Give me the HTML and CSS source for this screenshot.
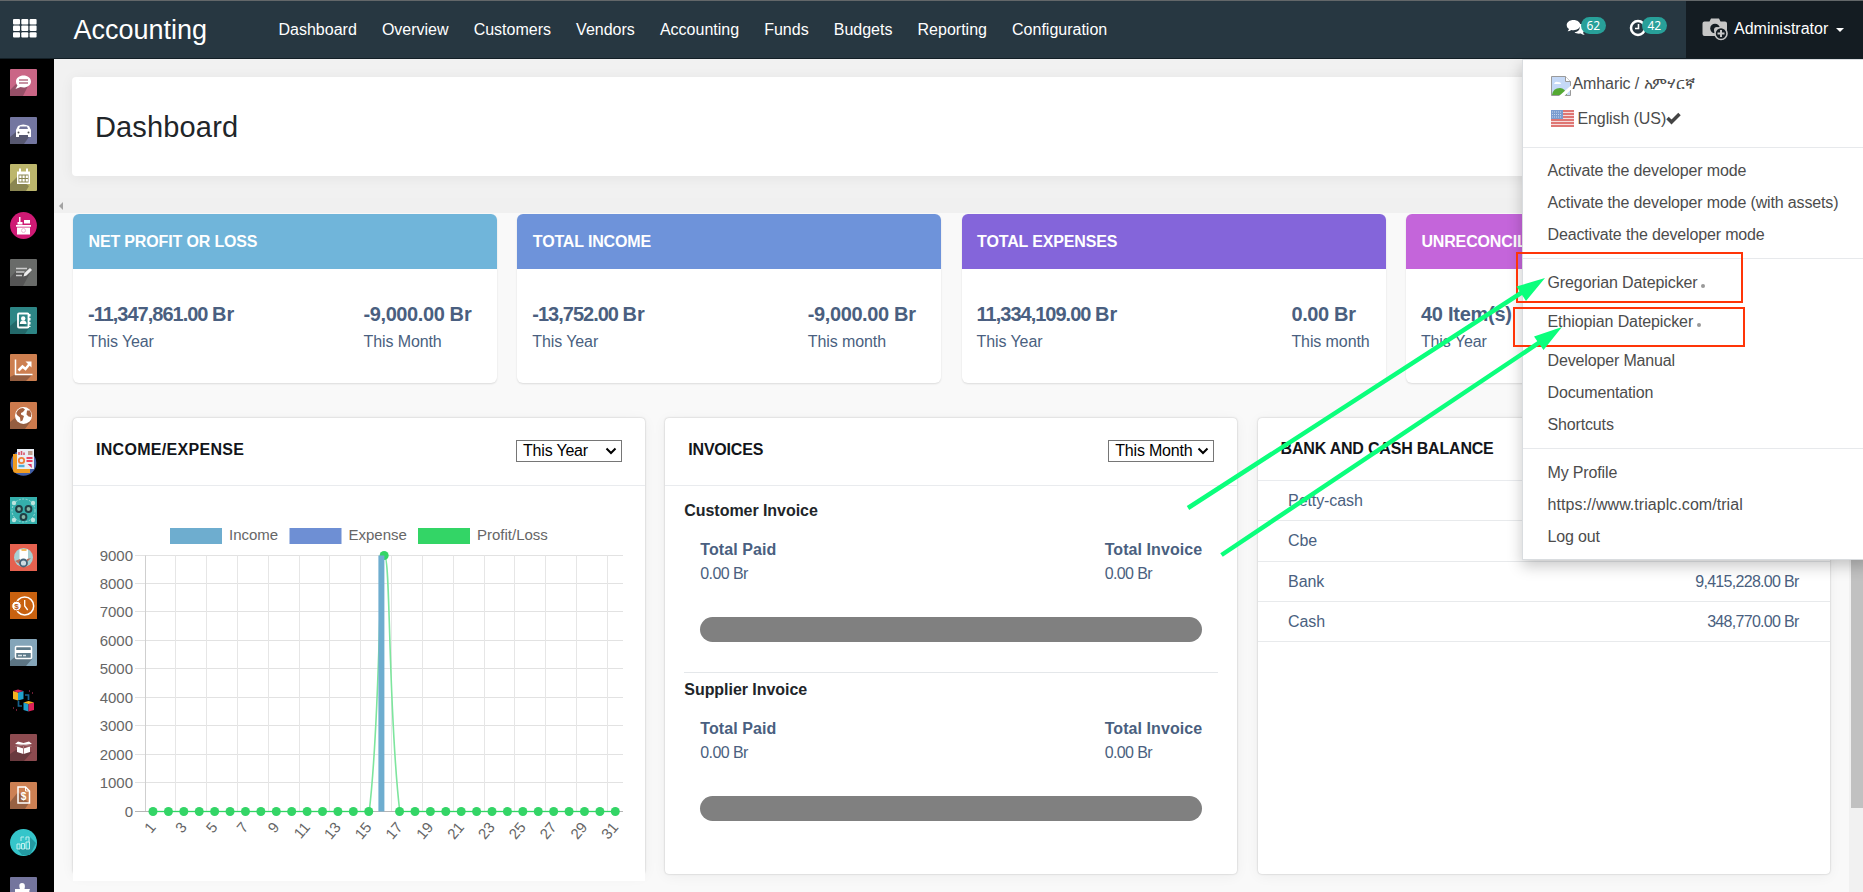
FILE: index.html
```html
<!DOCTYPE html>
<html lang="en">
<head>
<meta charset="utf-8">
<title>Accounting - Dashboard</title>
<link rel="stylesheet" href="styles.css">
</head>
<body>
<header class="topbar">
  <svg class="apps" viewBox="0 0 24 19" fill="#fff"><rect width="7" height="5.4" rx="1"/><rect x="8.3" width="7" height="5.4" rx="1"/><rect x="16.6" width="7" height="5.4" rx="1"/><rect y="6.6" width="7" height="5.4" rx="1"/><rect x="8.3" y="6.6" width="7" height="5.4" rx="1"/><rect x="16.6" y="6.6" width="7" height="5.4" rx="1"/><rect y="13.2" width="7" height="5.4" rx="1"/><rect x="8.3" y="13.2" width="7" height="5.4" rx="1"/><rect x="16.6" y="13.2" width="7" height="5.4" rx="1"/></svg>
  <div class="brand">Accounting</div>
  <nav class="menu"><span>Dashboard</span><span>Overview</span><span>Customers</span><span>Vendors</span><span>Accounting</span><span>Funds</span><span>Budgets</span><span>Reporting</span><span>Configuration</span></nav>
  <div class="systray">
    <div class="tray"><svg width="20" height="18" viewBox="0 0 20 18" fill="#fff"><path d="M13 5c3.5 0 6 2 6 4.8 0 1.5-.8 2.7-1.9 3.6.2 1 .8 1.8 1.700 2.600-1.600 0-3-.5-4-1.400-2.500.4-4.800 0-6.300-1.300C12.500 13 15 10 13 5z"/><path d="M7.500 1C11.300 1 14.300 3.200 14.300 6s-3 5.200-6.800 5.200c-.8 0-1.500-.1-2.200-.3-1 .8-2.300 1.200-3.700 1.300.8-.7 1.200-1.300 1.400-2.100C1.600 9.200.7 7.800.7 6 .7 3.200 3.700 1 7.500 1z"/></svg><b class="badge">62</b></div>
    <div class="tray"><svg width="18" height="18" viewBox="0 0 18 18" fill="none" stroke="#fff"><circle cx="9" cy="9" r="7" stroke-width="2.5"/><path d="M9.5 5v4.5H6" stroke-width="1.6"/></svg><b class="badge">42</b></div>
  </div>
  <div class="user">
    <svg class="camera" width="27" height="23" viewBox="0 0 27 23"><path d="M2.5 3.500h5l1.500-3h8l1.500 3H23a2 2 0 0 1 2 2v12.500H2.500a2 2 0 0 1-2-2V5.500a2 2 0 0 1 2-2z" fill="#c6c6c6"/><circle cx="13" cy="10.5" r="4.8" fill="#141c22"/><circle cx="15" cy="12" r="3" fill="#c6c6c6"/><circle cx="19" cy="15.500" r="6" fill="#141c22" stroke="#c6c6c6" stroke-width="1.600"/><path d="M19 12v7M15.500 15.500h7" stroke="#c6c6c6" stroke-width="2"/></svg>
    <span>Administrator</span><i class="caret"></i>
  </div>
</header>
<div class="body">
  <aside class="apps-bar">
    <svg viewBox="0 0 27 27"><rect width="27" height="27" rx="1" fill="#ca6686"/><path d="M0 27V21l6-6 14-2-7 14z" fill="#975068"/><path d="M13.500 6.500c4 0 7.500 2.500 7.500 6s-3.500 6-7.500 6c-1 0-2-.2-3-.5l-5 2 2-3.500C6.600 15.500 6 14 6 12.500c0-3.500 3.500-6 7.500-6z" fill="#fff"/><path d="M9 11h9M9 14h9" stroke="#b57085" stroke-width="1.5"/></svg>
    <svg viewBox="0 0 27 27"><rect width="27" height="27" rx="1" fill="#7376a0"/><path d="M0 27V20l6-5 15 2-7 10z" fill="#575870"/><path d="M6 13l2-4q5-3 11 0l2 4v7h-3v-2H9v2H6z" fill="#fff"/><path d="M9 12l1-2.500h7l1 2.500z" fill="#73759b"/><circle cx="8.500" cy="15.500" r="1" fill="#555"/><circle cx="18.500" cy="15.500" r="1" fill="#555"/></svg>
    <svg viewBox="0 0 27 27"><rect width="27" height="27" rx="1" fill="#bcb66c"/><path d="M0 27V20l7-7 12 9-3 5z" fill="#8a8652"/><path d="M7 7.500h13V20H7z" fill="#fff"/><path d="M10 4.500v4M17 4.500v4" stroke="#fff" stroke-width="2"/><path d="M8.500 10.500h10v8h-10z" fill="#8a8652"/><path d="M9.300 12.700h9M9.300 16.200h9" stroke="#fff" stroke-width="2.400" stroke-dasharray="2.200 1"/></svg>
    <svg viewBox="0 0 27 27"><circle cx="13.500" cy="13.500" r="13.400" fill="#cf1a74"/><path d="M6 13h15v1.700H6zM7 15.500h13v7H7zM14 8h6v3.500h-6zM7.500 12.500V10h5v2.500zM9 5h1.500v5H9z" fill="#fff"/><circle cx="13.500" cy="18.500" r="2" fill="none" stroke="#eebad2"/></svg>
    <svg viewBox="0 0 27 27"><rect width="27" height="27" rx="1" fill="#696b69"/><path d="M0 27V19l6-7 14 2-7 13z" fill="#555"/><path d="M6 9.500h11M6 13h8.500M6 16.500h6" stroke="#ccc" stroke-width="1.600"/><path d="M13.500 17.500l1-3.500 5.500-5 2 2-5.500 5.500z" fill="#eee"/></svg>
    <svg viewBox="0 0 27 27"><rect width="27" height="27" rx="1" fill="#2d8585"/><path d="M0 27V19l7-6 12 8-4 6z" fill="#23696a"/><rect x="8" y="6.500" width="10.500" height="14" rx="1" fill="none" stroke="#fff" stroke-width="1.800"/><circle cx="13.200" cy="11.500" r="2.200" fill="#fff"/><path d="M9.800 17q0-3.500 3.400-3.500t3.400 3.500z" fill="#fff"/><path d="M19.800 7v13" stroke="#fff" stroke-width="1.500" stroke-dasharray="2.500 1.500"/></svg>
    <svg viewBox="0 0 27 27"><rect width="27" height="27" rx="1" fill="#cd7f50"/><path d="M0 27V23l6-3 16 1-6 6z" fill="#955e40"/><path d="M5.500 5.500v15h17" fill="none" stroke="#fff" stroke-width="1.500"/><path d="M8.500 16.500l4-4 3 2.500 4-5" fill="none" stroke="#fff" stroke-width="2.500"/><path d="M15.500 7.500h6v6z" fill="#fff"/></svg>
    <svg viewBox="0 0 27 27"><rect width="27" height="27" rx="1" fill="#cc7a4d"/><path d="M0 27V20l6-5 15 4-6 8z" fill="#955e40"/><circle cx="13.500" cy="13.500" r="8.500" fill="#fff"/><path d="M8 8q2-2 5-2l2 1.500-2 2.500-2 1 0 1.500 3 1.500-1.500 4.500-2 1-.5-4-3-2.500-.8-2zM17 8.500l3 0 1.300 3.500-.3 3-2.500-.5-2-2z" fill="#a5613f"/></svg>
    <svg viewBox="0 0 27 27"><circle cx="13.500" cy="14" r="12.800" fill="#4360a9"/><path d="M3 5h17v19H6q-3 0-3-3z" fill="#ef9c23"/><path d="M7 0h17v20H7z" fill="#e9eef5"/><path d="M9 6V3M11.500 6V2M14 6V3.500" stroke="#d9566a" stroke-width="1.600"/><path d="M18 3h4.500M18 5h4.500" stroke="#b1846b" stroke-width="1.500"/><circle cx="11.500" cy="11.500" r="2.700" fill="none" stroke="#ee8139" stroke-width="1.800"/><path d="M16.500 9h6M16.500 12h6" stroke="#ed4462" stroke-width="1.900"/><path d="M8.500 17h6" stroke="#52aeda" stroke-width="2.400"/><path d="M17.500 15h4l.5 4z" fill="#da3367"/></svg>
    <svg viewBox="0 0 27 27"><rect width="27" height="27" fill="#35afac"/><circle cx="13.500" cy="13.500" r="11.500" fill="none" stroke="#b5e2df" stroke-dasharray="2 1.500" stroke-width=".8"/><g fill="#86b5a5" stroke="#203f45" stroke-width="2"><circle cx="9" cy="12" r="2.900"/><circle cx="18.500" cy="12" r="2.900"/><circle cx="13.500" cy="20" r="2.900"/></g><g fill="#bce4de"><circle cx="4" cy="6" r="2.200"/><circle cx="23" cy="6" r="2.200"/><circle cx="4" cy="23" r="2.200"/><circle cx="23" cy="23" r="2.200"/></g></svg>
    <svg viewBox="0 0 27 27"><rect width="27" height="27" fill="#e5614f"/><circle cx="13.500" cy="13.500" r="9.500" fill="#a8cfd2"/><path d="M9.500 5.500h8.500v10H9.500z" fill="#fff"/><path d="M11.500 6h5" stroke="#f0b653" stroke-width="1.800"/><path d="M5 17l5-2 1 6zM21 14l-4 1-1 4z" fill="#b5705f"/><circle cx="13.500" cy="19" r="3.500" fill="#cfdce2" stroke="#456378" stroke-width="1.800"/></svg>
    <svg viewBox="0 0 27 27"><rect width="27" height="27" fill="#c8610f"/><circle cx="14.700" cy="14" r="9" fill="none" stroke="#fff" stroke-width="1.500"/><circle cx="6.500" cy="14" r="4.800" fill="#fff" stroke="#c8610f"/><path d="M14.700 8v6l3 4" fill="none" stroke="#fff" stroke-width="1.300"/><text x="4.300" y="17" font-size="8" font-weight="700" fill="#b9580e">$</text></svg>
    <svg viewBox="0 0 27 27"><rect width="27" height="27" rx="1" fill="#84a5b9"/><path d="M0 27V22l6-5 16 3-6 7z" fill="#5c7483"/><rect x="5.500" y="7.500" width="16" height="12" rx="1" fill="#5f7b8a" stroke="#fff" stroke-width="1.500"/><path d="M5 12.500h17" stroke="#fff" stroke-width="3"/><path d="M8 16.500h8" stroke="#dce5e9" stroke-width="1.500" stroke-dasharray="4 1"/></svg>
    <svg viewBox="0 0 27 27"><path d="M3 4l5 1.500v8L3 12z" fill="#f4b221"/><path d="M13.500 4L8 5.500v8l5.500-1.500z" fill="#21a2cd"/><path d="M3 4l5-1.500L13.500 4 8 5.500z" fill="#dc2158"/><path d="M13.500 15.500l5 1.500v7.500l-5-1.500z" fill="#21a2cd"/><path d="M24 15.500l-5.500 1.500v7.500L24 23z" fill="#dc2158"/><path d="M13.500 15.500l5-1.500 5.500 1.500-5.500 1.500z" fill="#f4b221"/><path d="M15 8h3.500v5M8.500 14v5H12" fill="none" stroke="#17618d" stroke-width="1.700"/><path d="M19 4h1M22 6h1M3 21h1M6 23h1" stroke="#dd3867"/></svg>
    <svg viewBox="0 0 27 27"><rect width="27" height="27" rx="1" fill="#8d4b50"/><path d="M0 27V20l6-4 16 2-8 9z" fill="#693a3e"/><path d="M13.500 11L5 10l3-2.500 5.500 1.500L19 7.500l3 2.500zM7 12.500l6.500 2 6.500-2v5.500l-6.500 2L7 18z" fill="#fff"/><path d="M13.500 12v8M5.500 12.500l8-1.500 8 1.500" stroke="#a97e82" fill="none"/></svg>
    <svg viewBox="0 0 27 27"><rect width="27" height="27" rx="1" fill="#cc8053"/><path d="M0 27V20l8-10 11 11-4 6z" fill="#986142"/><path d="M8 5h7.500l4 4v12H8z" fill="none" stroke="#fff" stroke-width="1.500"/><path d="M15.500 5v4h4" fill="none" stroke="#fff"/><text x="10.800" y="18" font-size="10" font-weight="700" fill="#fff">$</text></svg>
    <svg viewBox="0 0 27 27"><circle cx="13.500" cy="13.500" r="13.500" fill="#35c5ca"/><path d="M7 20h13V8l6 6-6 12H12z" fill="#2399a1"/><path d="M7 15h3v5H7zM11.500 14.500h3v5.500h-3zM16 13h3.500v7H16zM11 12V8h3M16 11V8h3v5" fill="none" stroke="#c0efed"/></svg>
    <svg viewBox="0 0 27 27"><rect width="27" height="27" rx="1" fill="#74759d"/><path d="M0 27V20l6-5 14 12z" fill="#575873"/><path d="M5 12h5q-2-6 2-6t2.500 6H20q-2 4 2 4v3h-3v9H5z" fill="#fff"/></svg>
  </aside>
  <main class="content">
    <section class="panel"><h1>Dashboard</h1></section>
    <div class="collapse"><i></i></div>
    <section class="board">
      <div class="kpis">
        <article class="kpi c1"><h2>NET PROFIT OR LOSS</h2><div class="vals"><div><b>-11,347,861.00 <em>Br</em></b><span>This Year</span></div><div class="wide"><b class="short">-9,000.00 <em>Br</em></b><span>This Month</span></div></div></article>
        <article class="kpi c2"><h2>TOTAL INCOME</h2><div class="vals"><div><b>-13,752.00 <em>Br</em></b><span>This Year</span></div><div class="wide"><b class="short">-9,000.00 <em>Br</em></b><span>This month</span></div></div></article>
        <article class="kpi c3"><h2>TOTAL EXPENSES</h2><div class="vals"><div><b>11,334,109.00 <em>Br</em></b><span>This Year</span></div><div><b class="short">0.00 <em>Br</em></b><span>This month</span></div></div></article>
        <article class="kpi c4"><h2>UNRECONCILED</h2><div class="vals"><div><b class="items">40 Item(s)</b><span>This Year</span></div></div></article>
      </div>
      <div class="cards">
        <article class="card">
          <div class="head"><h3 class="loose">INCOME/EXPENSE</h3><div class="select">This Year<svg width="12" height="8" viewBox="0 0 12 8"><path d="M1.500 1.500L6 6l4.500-4.500" fill="none" stroke="#000" stroke-width="2"/></svg></div></div>
          <svg class="chart" id="chart" width="572" height="395" viewBox="73 486 572 395"></svg>
        </article>
        <article class="card">
          <div class="head"><h3>INVOICES</h3><div class="select">This Month<svg width="12" height="8" viewBox="0 0 12 8"><path d="M1.500 1.500L6 6l4.500-4.500" fill="none" stroke="#000" stroke-width="2"/></svg></div></div>
          <div class="invoices">
            <section class="invoice"><h4>Customer Invoice</h4><div class="totals"><div><b>Total Paid</b><span>0.00 Br</span></div><div><b>Total Invoice</b><span>0.00 Br</span></div></div><div class="bar"></div></section>
            <section class="invoice"><h4>Supplier Invoice</h4><div class="totals"><div><b>Total Paid</b><span>0.00 Br</span></div><div><b>Total Invoice</b><span>0.00 Br</span></div></div><div class="bar"></div></section>
          </div>
        </article>
        <article class="card">
          <div class="head bank"><h3>BANK AND CASH BALANCE</h3></div>
          <ul class="rows"><li><span>Petty-cash</span></li><li><span>Cbe</span></li><li><span>Bank</span><span class="num">9,415,228.00 Br</span></li><li><span>Cash</span><span class="num">348,770.00 Br</span></li></ul>
        </article>
      </div>
    </section>
  </main>
  <div class="scroll"><div class="thumb"></div></div>
</div>
<div class="dropdown">
  <div class="lang first"><svg width="20" height="20" viewBox="0 0 20 20"><path d="M.5.5h14l5 5v14H.5z" fill="#c5d9f7" stroke="#9a9a9a"/><path d="M1 19q1-7 8-7 5 0 7 7z" fill="#54a933"/><path d="M3 8q1-3 4-2 3 0 3 2z" fill="#fff"/><path d="M14.500.5v5h5" fill="#fff" stroke="#9a9a9a"/><path d="M20 9.500v4L13.500 20H8z" fill="#fff"/></svg><span>Amharic / አምሃርኛ</span></div>
  <div class="lang"><svg class="flag" width="23" height="17" viewBox="0 0 23 17"><rect width="23" height="17" fill="#f5dddd"/><path d="M0 1h23M0 4h23M0 7h23M0 10h23M0 13h23M0 16h23" stroke="#d85450" stroke-width="1.500"/><rect width="12" height="9" fill="#7b9cd0"/><path d="M1 2h10M1 4.500h10M1 7h10" stroke="#c7d6ec" stroke-dasharray="1 1"/></svg><span>English (US)</span><svg width="15" height="13" viewBox="0 0 15 13"><path d="M1.500 6l4 4L13.500 2" fill="none" stroke="#444" stroke-width="3.500"/></svg></div>
  <hr class="hr1">
  <a>Activate the developer mode</a><a>Activate the developer mode (with assets)</a><a>Deactivate the developer mode</a>
  <hr>
  <a class="tall">Gregorian Datepicker<i></i></a><a class="tall">Ethiopian Datepicker<i></i></a><a>Developer Manual</a><a>Documentation</a><a>Shortcuts</a>
  <hr>
  <a>My Profile</a><a class="url">https://www.triaplc.com/trial</a><a>Log out</a>
</div>
<svg class="notes" width="1863" height="892" viewBox="0 0 1863 892">
  <g fill="none" stroke="#ff3508" stroke-width="2"><rect x="1517" y="253" width="225" height="49"/><rect x="1514" y="308" width="230" height="38"/></g>
  <g stroke="#0bff7c" stroke-width="4.500"><path d="M1188 508L1525 290.500M1221.500 555L1543 340"/></g>
  <g fill="#0bff7c"><path d="M1545 278l-28.500 8.500 9.500 14.500zM1562 327l-28 9.500 9.500 13.500z"/></g>
</svg>
<script src="chart.js"></script>
</body>
</html>
```
FILE: styles.css
```css
* { box-sizing: border-box; }
body { margin: 0; height: 892px; overflow: hidden; position: relative; background: #f9f9f9; color: #212529; font: 16px/24px "Liberation Sans", Arial, sans-serif; letter-spacing: -.1px; }
h1, h2, h3, h4, ul { margin: 0; padding: 0; }
svg { display: block; flex: none; }
.topbar { display: flex; height: 59px; background: #273741; border-top: 1px solid #636769; border-bottom: 1px solid #131f26; color: #fff; }
.apps { width: 24px; height: 19px; margin: 18px 0 0 13px; }
.brand { margin: 9px 0 0 36.5px; width: 195px; font-size: 27px; line-height: 40px; letter-spacing: 0; white-space: nowrap; }
.menu { display: flex; gap: 25.1px; margin: 17px 0 0 10px; white-space: nowrap; letter-spacing: 0; }
.systray { display: flex; gap: 24px; margin: 16px 0 0 auto; padding-right: 19px; }
.tray { display: flex; width: 38px; }
.tray svg { margin-top: 2px; }
.tray:first-child { width: 39px; }
.badge { width: 24.5px; height: 17px; margin-left: -5px; flex: none; border-radius: 9px; background: #28a099; font: 12px/17px "Noto Sans", sans-serif; letter-spacing: 0; text-align: center; z-index: 1; }
.user { width: 177px; height: 57px; background: #141c22; display: flex; align-items: center; padding: 0 0 9px 16px; }
.user span { margin: 8px 8px 0 5px; width: 94px; white-space: nowrap; letter-spacing: 0; }
.camera { margin-top: 9px; }
.caret { border: 4px solid transparent; border-top-color: #fff; border-bottom: 0; margin-top: 9px; }
.body { display: flex; height: 833px; }
.apps-bar { width: 54px; background: #000; display: flex; flex-direction: column; gap: 20.5px; padding: 10px 0 0 10px; overflow: hidden; }
.apps-bar svg { width: 27px; height: 27px; }
.content { width: 1795px; background: #f9f9f9; }
.panel { height: 139px; background: #f1f1f1; padding: 18px 0 0 18px; }
.panel h1 { height: 99px; background: #fff; border-radius: 4px; padding: 29px 23px; box-shadow: 0 2px 14px rgba(0,0,0,.06); font-size: 29px; line-height: 42px; font-weight: 400; letter-spacing: .15px; }
.collapse { height: 15px; background: #f0f0f0; padding: 4px 0 0 5px; }
.collapse i { display: block; width: 0; border: 4px solid transparent; border-right-color: #a3a3a3; border-left: 0; }
.board { padding: 1px 19px 0; }
.kpis { display: grid; grid-template-columns: repeat(4, 424px); gap: 20.3px; }
.kpi { height: 169px; background: #fff; border-radius: 6px; overflow: hidden; box-shadow: 0 1px 2px rgba(0,0,0,.12); }
.kpi h2 { height: 55px; padding: 16px 15.5px; font-size: 16px; line-height: 24px; color: #fff; white-space: nowrap; letter-spacing: -.15px; }
.c1 h2 { background: #70b5da; }
.c2 h2 { background: #6e93da; }
.c3 h2 { background: #8465da; }
.c4 h2 { background: #c465da; }
.vals { display: flex; justify-content: space-between; padding: 31px 16px 0 15px; color: #4a5f80; }
.vals b { display: block; font-size: 20px; line-height: 28px; letter-spacing: -1px; white-space: nowrap; }
.vals .short { letter-spacing: -.4px; }
.vals em { font-style: normal; letter-spacing: 0; }
.vals .items { letter-spacing: -.25px; }
.vals span { display: block; line-height: 27px; letter-spacing: -.1px; }
.wide { width: 117.5px; }
.cards { display: grid; grid-template-columns: repeat(3, 572px); gap: 20.3px; margin-top: 35px; }
.card { height: 456px; background: #fff; border-radius: 4px; box-shadow: 0 0 2px rgba(0,0,0,.25), 0 2px 14px rgba(0,0,0,.05); }
.head { height: 68px; border-bottom: 1px solid #e9ebee; display: flex; justify-content: space-between; padding: 20px 23px 0; color: #12151a; }
.head.bank { height: 63px; padding-top: 19px; }
.head h3 { font-size: 16px; line-height: 24px; letter-spacing: -.2px; white-space: nowrap; }
.head .loose { letter-spacing: .3px; }
.select { width: 106px; height: 22px; margin-top: 2px; border: 1px solid #767676; background: #fff; color: #000; padding: 0 4px 0 6px; display: flex; align-items: center; justify-content: space-between; letter-spacing: -.2px; line-height: 20px; white-space: nowrap; }
.invoices { padding: 13px 19px 0; }
.invoice h4 { font-size: 16px; line-height: 24px; letter-spacing: -.05px; }
.invoice + .invoice { border-top: 1px solid #e4e7ea; margin-top: 30px; padding-top: 5px; }
.totals { display: flex; justify-content: space-between; margin: 15px 16px 0; color: #4a5f80; }
.totals b, .totals span { display: block; line-height: 24px; }
.totals b { letter-spacing: .08px; }
.totals span { letter-spacing: -.6px; }
.bar { height: 25px; margin: 31px 16px 0; border-radius: 12.5px; background: #808080; }
.rows { list-style: none; color: #4a5f80; }
.rows li { height: 40.25px; border-bottom: 1px solid #e8eaec; display: flex; justify-content: space-between; padding: 8px 31px 0 30.5px; }
.num { letter-spacing: -.7px; }
.chart { background: #fff; }
.chart text { font-size: 15px; fill: #666; letter-spacing: 0; }
.scroll { width: 14px; background: #f1f1f1; padding-left: 2px; }
.thumb { width: 11.5px; height: 749px; background: #c1c1c1; }
.dropdown { position: absolute; left: 1522px; top: 59px; width: 350px; height: 501px; background: #fff; border: 1px solid #d9dcdf; box-shadow: 0 6px 14px rgba(0,0,0,.22); color: #4c4c4c; white-space: nowrap; }
.dropdown a { display: flex; height: 32px; line-height: 32px; padding-left: 24.5px; letter-spacing: -.15px; }
.dropdown a.tall { height: 39px; letter-spacing: -.1px; }
.dropdown a.url { letter-spacing: .05px; }
.dropdown a i { width: 4px; height: 4px; border-radius: 2px; background: #999; margin: 17px 0 0 3.5px; }
.dropdown hr { border: 0; border-top: 1px solid #e7e9ec; margin: 7px 0 8px; }
.dropdown .hr1 { margin: 11px 0 7px; }
.lang { display: flex; height: 35px; align-items: center; padding-left: 27.5px; }
.lang.first { height: 39px; padding-top: 8px; margin-top: 2px; }
.lang.first span { margin-left: 2px; margin-top: -4px; }
.flag { margin-right: 4px; }
.notes { position: absolute; left: 0; top: 0; }
```
FILE: chart.js
```js
const parts = [];
const left = 145.5, right = 623, top0 = 555.5, base = 811.5;
for (let i = 0; i <= 9; i++) {
  const y = Math.round(base - i * 28.44) - 0.5;
  parts.push(`<path d="M135 ${y}H${right}" stroke="${i ? '#e2e2e2' : '#b5b5b5'}"/>`);
  parts.push(`<text x="133" y="${y + 5}" text-anchor="end">${i * 1000}</text>`);
}
for (let i = 0; i < 16; i++) {
  const x = Math.round(left + i * 30.82) - 0.5;
  parts.push(`<path d="M${x} ${top0}V811" stroke="${i ? '#e6e6e6' : '#cfcfcf'}"/>`);
  parts.push(`<text transform="translate(${152.5 + i * 30.82} 824) rotate(-50)" text-anchor="end" dominant-baseline="central">${i * 2 + 1}</text>`);
}
parts.push(`<path d="M153 811.5H369.2C381 714 378.3 555.5 384.5 555.5S388 714 399.8 811.5H615" fill="none" stroke="#7de59d" stroke-width="1.6"/>`);
parts.push(`<path d="M153 811.5H369M400 811.5H615" stroke="#33d566" stroke-width="1"/>`);
for (let i = 0; i < 31; i++) {
  parts.push(`<circle cx="${153 + i * 15.41}" cy="${i === 15 ? 555.5 : 811.5}" r="4.5" fill="#33d566"/>`);
}
parts.push(`<rect x="378.4" y="555.5" width="6" height="256" fill="#6eadcf"/>`);
[[170, '#6eadcf', 'Income'], [289.5, '#6e8fd4', 'Expense'], [418, '#33d566', 'Profit/Loss']].forEach(([x, c, t]) => {
  parts.push(`<rect x="${x}" y="528" width="52" height="16" fill="${c}"/><text x="${x + 59}" y="540">${t}</text>`);
});
document.getElementById('chart').innerHTML = parts.join('');
```
